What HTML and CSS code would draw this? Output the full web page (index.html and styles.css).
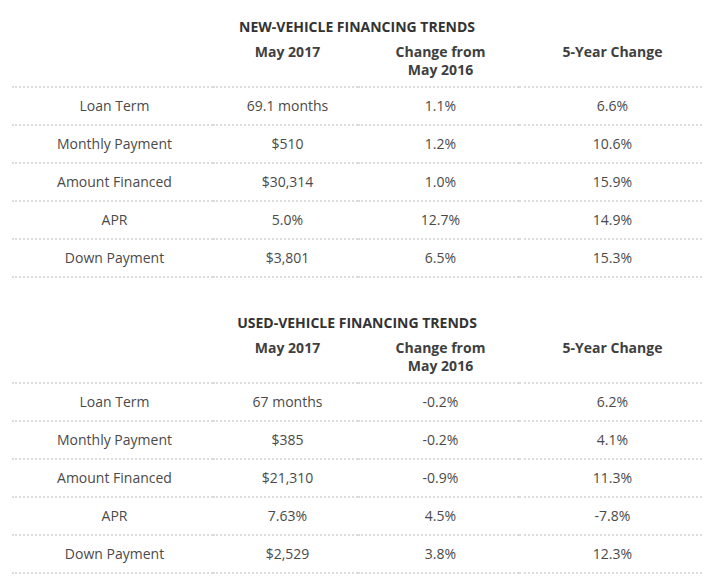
FILE: index.html
```html
<!DOCTYPE html>
<html>
<head>
<meta charset="utf-8">
<link rel="stylesheet" href="styles.css">
</head>
<body>
<div class="page">
  <table class="trends">
    <caption>NEW-VEHICLE FINANCING TRENDS</caption>
    <colgroup><col class="c1"><col class="c2"><col class="c3"><col class="c4"></colgroup>
    <thead>
      <tr><th></th><th>May 2017</th><th><span class="hl">Change from</span><span class="hl">May 2016</span></th><th>5-Year Change</th></tr>
    </thead>
    <tbody>
      <tr><td>Loan Term</td><td>69.1 months</td><td>1.1%</td><td>6.6%</td></tr>
      <tr><td>Monthly Payment</td><td>$510</td><td>1.2%</td><td>10.6%</td></tr>
      <tr><td>Amount Financed</td><td>$30,314</td><td>1.0%</td><td>15.9%</td></tr>
      <tr><td>APR</td><td>5.0%</td><td>12.7%</td><td>14.9%</td></tr>
      <tr><td>Down Payment</td><td>$3,801</td><td>6.5%</td><td>15.3%</td></tr>
    </tbody>
  </table>
  <table class="trends">
    <caption>USED-VEHICLE FINANCING TRENDS</caption>
    <colgroup><col class="c1"><col class="c2"><col class="c3"><col class="c4"></colgroup>
    <thead>
      <tr><th></th><th>May 2017</th><th><span class="hl">Change from</span><span class="hl">May 2016</span></th><th>5-Year Change</th></tr>
    </thead>
    <tbody>
      <tr><td>Loan Term</td><td>67 months</td><td>-0.2%</td><td>6.2%</td></tr>
      <tr><td>Monthly Payment</td><td>$385</td><td>-0.2%</td><td>4.1%</td></tr>
      <tr><td>Amount Financed</td><td>$21,310</td><td>-0.9%</td><td>11.3%</td></tr>
      <tr><td>APR</td><td>7.63%</td><td>4.5%</td><td>-7.8%</td></tr>
      <tr><td>Down Payment</td><td>$2,529</td><td>3.8%</td><td>12.3%</td></tr>
    </tbody>
  </table>
</div>
</body>
</html>
```
FILE: styles.css
```css
html, body {
  margin: 0;
  padding: 0;
  background: #ffffff;
}

.page {
  padding: 17px 6px 0 12px;
  font-family: "Open Sans", "Liberation Sans", sans-serif;
  color: #444444;
}

.trends {
  width: 690px;
  table-layout: fixed;
  border-collapse: separate;
  border-spacing: 0;
  margin-bottom: 35px;
}

.trends caption {
  font-size: 14px;
  font-weight: 700;
  line-height: 20px;
  color: #333333;
  text-align: center;
}

.c1 { width: 201px; }
.c2 { width: 145px; }
.c3 { width: 161px; }
.c4 { width: 183px; }

.trends th {
  font-size: 14px;
  font-weight: 700;
  line-height: 18px;
  color: #404040;
  text-align: center;
  vertical-align: top;
  padding: 6px 0 7px 4px;
  border-bottom: 2px dotted #dcdcdc;
}

.hl {
  display: block;
  line-height: 18px;
}

.trends td {
  font-size: 14px;
  font-weight: 400;
  line-height: 20px;
  color: #4a4a4a;
  text-align: center;
  padding: 8px 0 8px 4px;
  border-bottom: 2px dotted #dcdcdc;
}
```
